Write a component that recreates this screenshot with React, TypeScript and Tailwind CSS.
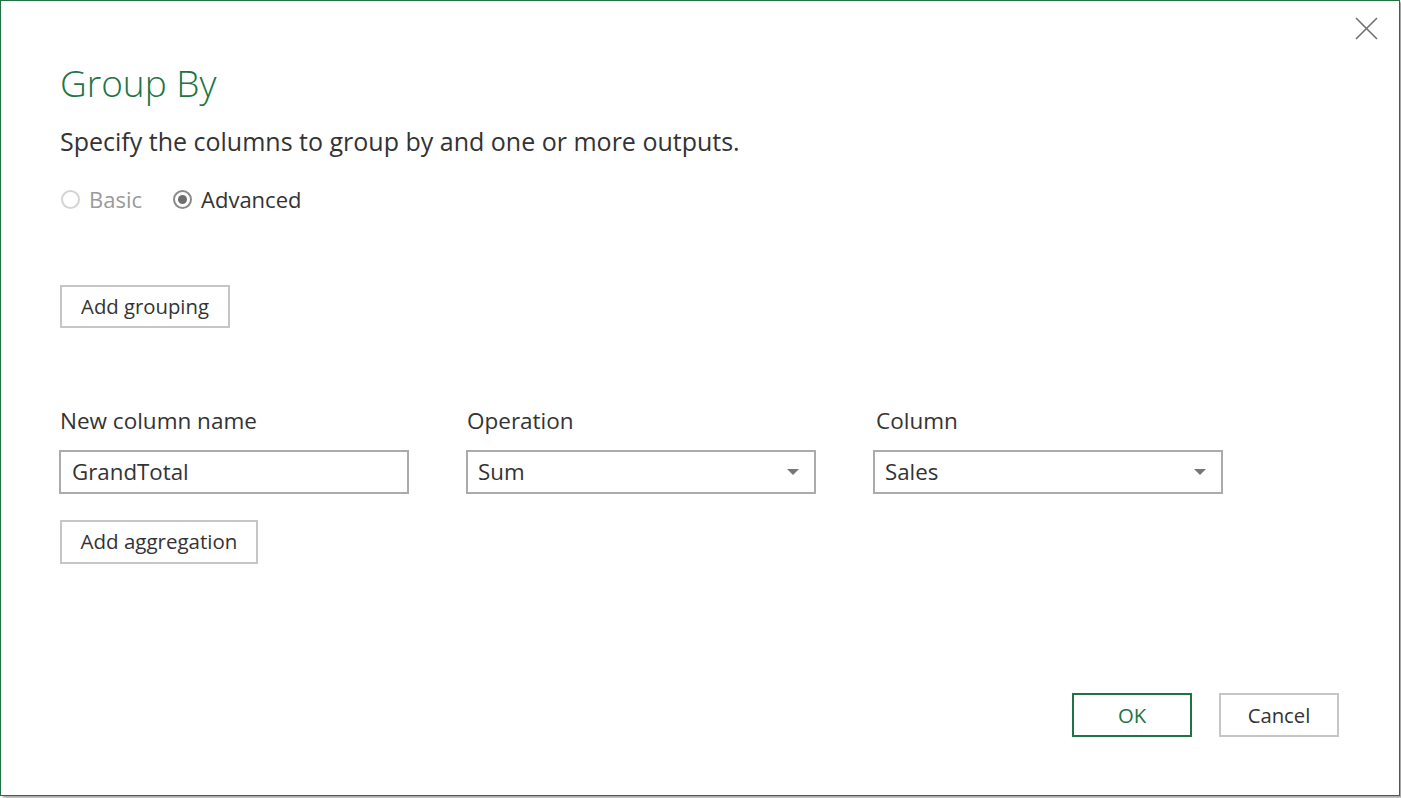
import React from "react";

const font = { fontFamily: '"Open Sans", "Noto Sans", sans-serif' };

function Radio({ checked, disabled, label }: { checked?: boolean; disabled?: boolean; label: string }) {
  return (
    <div className="flex items-center gap-[9px]">
      <div
        className={
          "w-[19px] h-[19px] rounded-full border-2 flex items-center justify-center " +
          (disabled ? "border-[#d4d4d4]" : "border-[#8a8a8a]")
        }
      >
        {checked && <div className="w-[9px] h-[9px] rounded-full bg-[#6e6e6e]" />}
      </div>
      <span className={"text-[22px] leading-none " + (disabled ? "text-[#9a9a9a]" : "text-[#333333]")}>{label}</span>
    </div>
  );
}

function Select({ value }: { value: string }) {
  return (
    <div className="w-[350px] h-[44px] border-2 border-[#ababab] flex items-center justify-between pl-[10px] pr-[14px]">
      <span className="text-[22.3px] text-[#333333]">{value}</span>
      <svg width="14" height="8" viewBox="0 0 14 8">
        <path d="M1 1 L13 1 L7 7 Z" fill="#777777" />
      </svg>
    </div>
  );
}

export default function App() {
  return (
    <div className="w-[1401px] h-[798px] bg-white" style={font}>
      <div className="w-[1400px] h-[796px] border border-[#217346] bg-white flex flex-col shadow-[3px_2px_2px_rgba(0,0,0,0.35)]">
        <div className="flex justify-end pt-[16px] pr-[21px] h-[40px]">
          <svg width="23" height="23" viewBox="0 0 23 23">
            <path d="M1 1 L22 22 M22 1 L1 22" stroke="#6f6f6f" strokeWidth="1.6" />
          </svg>
        </div>
        <div className="pl-[59px] flex flex-col">
          <div className="text-[37px] font-light text-[#217346] leading-none mt-[23px]">Group By</div>
          <div className="text-[25px] text-[#333333] leading-none mt-[28px]">
            Specify the columns to group by and one or more outputs.
          </div>
          <div className="flex items-center gap-[31px] mt-[34px] pl-[1px]">
            <Radio disabled label="Basic" />
            <Radio checked label="Advanced" />
          </div>
          <button className="mt-[75px] w-[170px] h-[43px] border-2 border-[#c6c6c6] text-[20.3px] text-[#333333] bg-white">
            Add grouping
          </button>
          <div className="flex gap-[57px] mt-[82px] -ml-[1px]">
            <div className="flex flex-col">
              <span className="text-[22.5px] text-[#333333] leading-none pl-[1px]">New column name</span>
              <div className="mt-[17px] w-[350px] h-[44px] border-2 border-[#ababab] flex items-center pl-[11px]">
                <span className="text-[22.3px] text-[#333333]">GrandTotal</span>
              </div>
            </div>
            <div className="flex flex-col">
              <span className="text-[22.5px] text-[#333333] leading-none pl-[1px]">Operation</span>
              <div className="mt-[17px]">
                <Select value="Sum" />
              </div>
            </div>
            <div className="flex flex-col">
              <span className="text-[22.5px] text-[#333333] leading-none pl-[3px]">Column</span>
              <div className="mt-[17px]">
                <Select value="Sales" />
              </div>
            </div>
          </div>
          <button className="mt-[26px] w-[198px] h-[44px] border-2 border-[#c6c6c6] text-[20.5px] text-[#333333] bg-white">
            Add aggregation
          </button>
        </div>
        <div className="flex-1" />
        <div className="flex justify-end gap-[27px] pr-[60px] pb-[58px]">
          <button className="w-[120px] h-[44px] border-2 border-[#217346] text-[20.3px] text-[#217346] bg-white">OK</button>
          <button className="w-[120px] h-[44px] border-2 border-[#c6c6c6] text-[20.3px] text-[#333333] bg-white">Cancel</button>
        </div>
      </div>
    </div>
  );
}
